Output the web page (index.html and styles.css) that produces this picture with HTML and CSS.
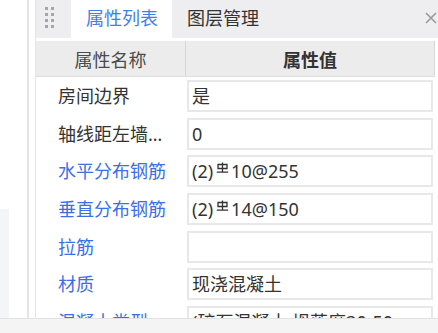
FILE: index.html
```html
<!DOCTYPE html>
<html lang="zh">
<head>
<meta charset="utf-8">
<title>属性列表</title>
<link rel="stylesheet" href="styles.css">
</head>
<body>
<div class="main">
  <div class="leftpane">
    <div class="strip"></div>
  </div>
  <div class="panel">
    <div class="tabbar">
      <div class="handle">
        <span></span><span></span><span></span><span></span>
        <span></span><span></span><span></span><span></span>
      </div>
      <div class="tab active">属性列表</div>
      <div class="tab">图层管理</div>
      <div class="spacer"></div>
      <svg class="close" width="12" height="12" viewBox="0 0 12 12"><path d="M1 1L11 11M11 1L1 11" stroke="#9a9a9a" stroke-width="1.6" fill="none"/></svg>
    </div>
    <div class="table">
      <div class="head">
        <div class="hcell">属性名称</div>
        <div class="hcell strong">属性值</div>
      </div>
      <div class="rows">
        <div class="row"><div class="label">房间边界</div><div class="val">是</div></div>
        <div class="row"><div class="label">轴线距左墙皮距离</div><div class="val">0</div></div>
        <div class="row"><div class="label blue">水平分布钢筋</div><div class="val">(2)<svg class="rebar" width="13" height="11" viewBox="0 0 13 11"><path d="M6.5 0.5V10M2 2.5H11V6.5H2ZM0.8 10.2H12.2" stroke="#333" stroke-width="1.3" fill="none"/></svg>10@255</div></div>
        <div class="row"><div class="label blue">垂直分布钢筋</div><div class="val">(2)<svg class="rebar" width="13" height="11" viewBox="0 0 13 11"><path d="M6.5 0.5V10M2 2.5H11V6.5H2ZM0.8 10.2H12.2" stroke="#333" stroke-width="1.3" fill="none"/></svg>14@150</div></div>
        <div class="row"><div class="label blue">拉筋</div><div class="val"></div></div>
        <div class="row"><div class="label blue">材质</div><div class="val">现浇混凝土</div></div>
        <div class="row"><div class="label blue">混凝土类型</div><div class="val">(碎石混凝土 坍落度30-50</div></div>
      </div>
    </div>
  </div>
</div>
<div class="footer"></div>
</body>
</html>
```

FILE: styles.css
```css
html, body {
  margin: 0;
  padding: 0;
  background: #ffffff;
}
body {
  width: 438px;
  height: 333px;
  overflow: hidden;
  display: flex;
  flex-direction: column;
  font-family: "Noto Sans", "Noto Sans CJK SC", sans-serif;
  font-size: 18px;
  color: #333;
}
.main {
  height: 318px;
  display: flex;
  overflow: hidden;
  border-bottom: 1px solid #e2e2e2;
}
.leftpane {
  width: 27px;
  border-right: 2px solid #e4e4e4;
  display: flex;
  flex-direction: column;
  justify-content: flex-end;
  flex-shrink: 0;
}
.strip {
  width: 9px;
  height: 109px;
  background: #f4f5f7;
}
.panel {
  margin-left: 6px;
  border-left: 1px solid #e6e6e6;
  flex: 1;
  display: flex;
  flex-direction: column;
  min-width: 0;
}
.tabbar {
  height: 38px;
  background: #eeeef0;
  display: flex;
  align-items: stretch;
  flex-shrink: 0;
}
.handle {
  width: 35px;
  display: grid;
  grid-template-columns: 3px 3px;
  grid-auto-rows: 3px;
  column-gap: 3px;
  row-gap: 3px;
  padding: 7px 0 0 9px;
  box-sizing: border-box;
}
.handle span {
  background: #a6a6a6;
}
.tab {
  padding: 0 15px 0 15px;
  line-height: 37px;
  color: #333;
  white-space: nowrap;
}
.tab.active {
  background: #ffffff;
  color: #3f7fe9;
  padding-right: 14px;
}
.spacer {
  flex: 1;
}
.close {
  align-self: flex-start;
  margin: 12px 1px 0 0;
}
.table {
  margin-top: 3px;
  width: 399px;
  display: flex;
  flex-direction: column;
}
.head {
  height: 36px;
  background: #ececec;
  border-bottom: 1px solid #dedede;
  border-right: 1px solid #d8d8d8;
  display: grid;
  grid-template-columns: 150px 1fr;
  box-sizing: border-box;
}
.hcell {
  display: flex;
  align-items: center;
  justify-content: center;
  color: #4a4a4a;
}
.hcell:first-child {
  border-right: 1px solid #d6d6d6;
}
.hcell.strong {
  font-weight: 700;
  color: #333;
}
.rows {
  padding-top: 3px;
  display: flex;
  flex-direction: column;
}
.row {
  height: 37.67px;
  flex-shrink: 0;
  display: grid;
  grid-template-columns: 151px 1fr;
  align-items: start;
}
.label {
  padding-left: 22px;
  padding-right: 14px;
  height: 32px;
  line-height: 32px;
  white-space: nowrap;
  overflow: hidden;
  text-overflow: ellipsis;
  color: #333;
}
.label.blue {
  color: #3a6fe6;
}
.val {
  height: 32px;
  margin-right: 2px;
  border: 2px solid #e8e8e8;
  box-sizing: border-box;
  padding-left: 3px;
  line-height: 28px;
  white-space: nowrap;
  overflow: hidden;
  color: #333;
}
.rebar {
  vertical-align: 5px;
  margin: 0 2px 0 3px;
}
.footer {
  flex: 1;
  background: #f4f4f4;
}
```
